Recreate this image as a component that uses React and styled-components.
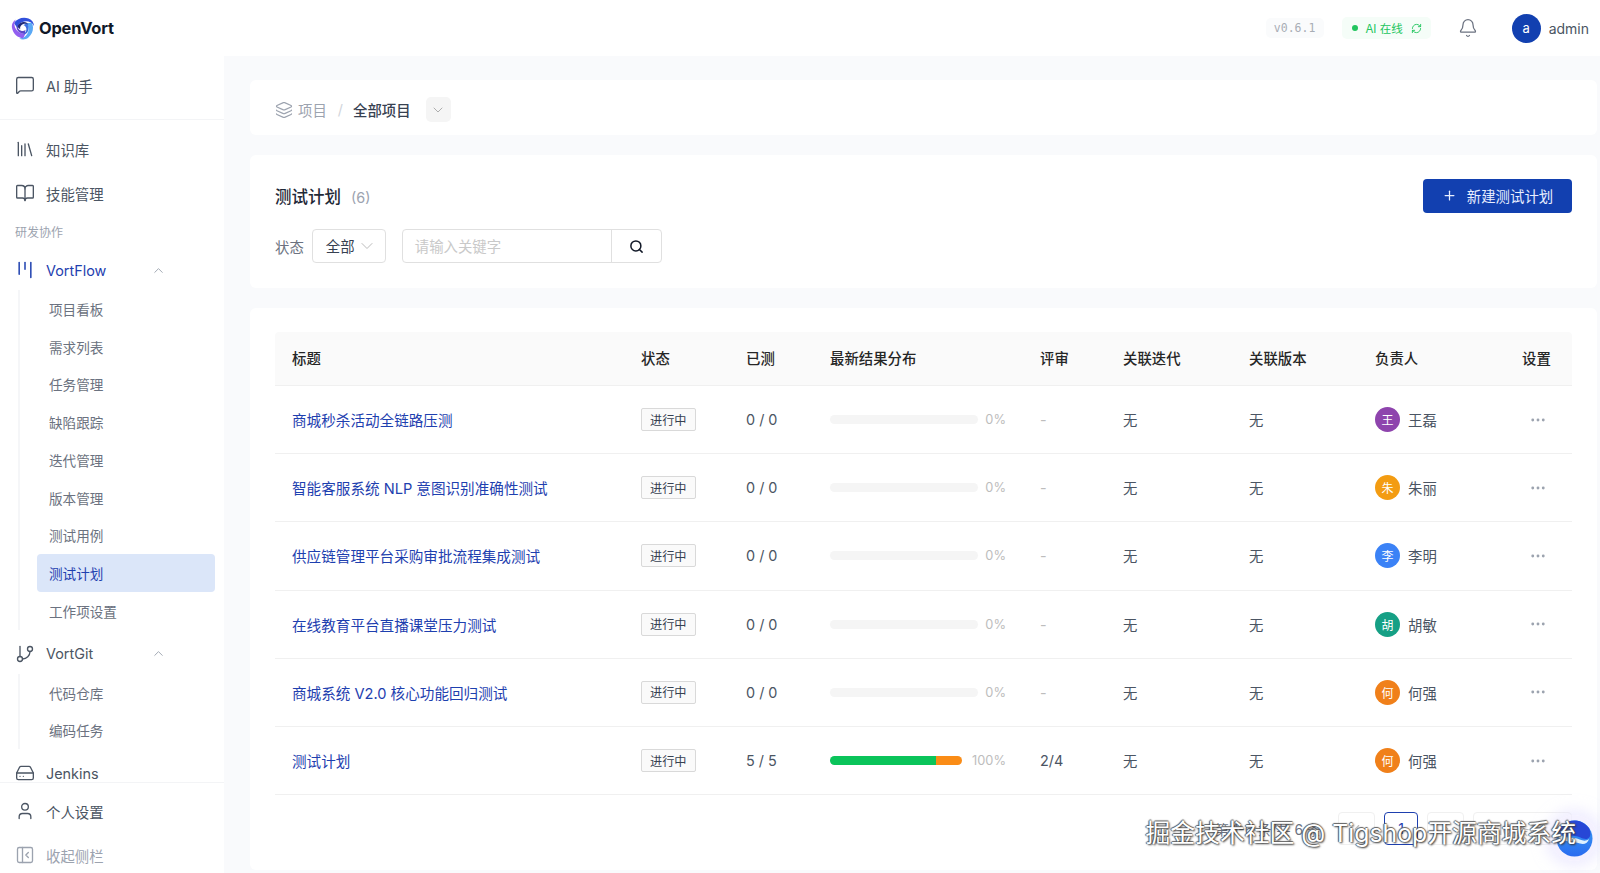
import React from "react";
import styled, { createGlobalStyle } from "styled-components";
import {
  MessageSquare,
  Library,
  BookOpen,
  Kanban,
  GitBranch,
  HardDrive,
  User,
  PanelLeftClose,
  Layers,
  ChevronDown,
  ChevronUp,
  ChevronLeft,
  ChevronRight,
  Search,
  Bell,
  RefreshCw,
  Plus,
  MoreHorizontal,
} from "lucide-react";

const BLUE = "#1e40af";
const FONT = `Inter, "Noto Sans CJK SC", sans-serif`;

const GlobalStyle = createGlobalStyle`
  html, body {
    margin: 0;
    padding: 0;
    height: 100%;
    overflow: hidden;
    background: #f9fafc;
    font-family: ${FONT};
    color: #374151;
  }
  * { box-sizing: border-box; }
`;

const Shell = styled.div`
  display: flex;
  width: 100vw;
  height: 100vh;
  overflow: hidden;
`;

/* sidebar */
const Sidebar = styled.aside`
  width: 224px;
  flex: none;
  height: 100%;
  background: #fff;
  display: flex;
  flex-direction: column;
`;

const LogoRow = styled.div`
  height: 56px;
  flex: none;
  display: flex;
  align-items: center;
  gap: 4px;
  padding-left: 11px;
`;

const LogoText = styled.span`
  font-size: 16.4px;
  font-weight: 700;
  color: #111827;
  letter-spacing: -0.2px;
`;

const ChatBlock = styled.div`
  height: 64px;
  flex: none;
  padding-top: 7px;
  border-bottom: 1px solid #f3f4f6;
`;

const NavScroll = styled.nav`
  flex: 1;
  min-height: 0;
  overflow: hidden;
  padding-top: 7px;
`;

const NavFooter = styled.div`
  flex: none;
  height: 91px;
  border-top: 1px solid #f3f4f6;
  padding-top: 6px;
`;

const NavItem = styled.div`
  height: 44px;
  display: flex;
  align-items: center;
  gap: 11px;
  padding: 0 15px;
  font-size: 14.4px;
  color: ${(p) => (p.$active ? BLUE : p.$muted ? "#9ca3af" : "#4b5563")};
  svg.lead {
    width: 20px;
    height: 20px;
    flex: none;
  }
`;

const Caret = styled(ChevronUp)`
  margin-left: auto;
  margin-right: 43px;
  color: #9ca3af;
`;

const GroupLabel = styled.div`
  height: 33px;
  display: flex;
  align-items: center;
  padding-left: 15px;
  font-size: 12px;
  color: #9ca3af;
`;

const SubList = styled.div`
  margin: -2px 0 2px 18px;
  border-left: 2px solid #f5f6f8;
  padding-right: 9px;
`;

const SubItem = styled.div`
  height: 37.75px;
  display: flex;
  align-items: center;
  margin-left: 17px;
  padding-left: 12px;
  font-size: 13.6px;
  border-radius: 4px;
  color: ${(p) => (p.$active ? BLUE : "#6b7280")};
  background: ${(p) => (p.$active ? "#dbe6f9" : "transparent")};
`;

/* top bar */
const Main = styled.main`
  flex: 1;
  min-width: 0;
  display: flex;
  flex-direction: column;
  position: relative;
`;

const TopBar = styled.header`
  height: 56px;
  flex: none;
  background: #fff;
  display: flex;
  align-items: center;
  justify-content: flex-end;
  padding-right: 11px;
`;

const Version = styled.span`
  font-family: "DejaVu Sans Mono", "Liberation Mono", monospace;
  font-size: 11.5px;
  color: #a8adb5;
  background: #fafbfc;
  border-radius: 5px;
  padding: 3px 9px 3px 8px;
  margin-right: 18px;
`;

const AiStatus = styled.span`
  display: flex;
  align-items: center;
  gap: 7px;
  font-size: 11.5px;
  color: #22c55e;
  background: #f5fdf8;
  border-radius: 5px;
  padding: 3px 9px 3px 10px;
  margin-right: 27px;
`;

const Dot = styled.i`
  width: 6px;
  height: 6px;
  border-radius: 50%;
  background: #22c55e;
`;

const SyncIcon = styled(RefreshCw)`
  margin-left: 1px;
`;

const BellIcon = styled(Bell)`
  color: #6b7280;
  margin-right: 34px;
`;

const Avatar = styled.span`
  width: ${(p) => p.$size}px;
  height: ${(p) => p.$size}px;
  flex: none;
  border-radius: 50%;
  background: ${(p) => p.$color};
  color: #fff;
  font-size: ${(p) => (p.$size > 26 ? 13 : 12)}px;
  display: flex;
  align-items: center;
  justify-content: center;
`;

const AdminName = styled.span`
  font-size: 14px;
  color: #4b5563;
  margin-left: 8px;
`;

/* content */
const Content = styled.div`
  flex: 1;
  min-height: 0;
  padding: 24px 3px 3px 26px;
  display: flex;
  flex-direction: column;
  gap: 20px;
`;

const Card = styled.section`
  background: #fff;
  border-radius: 6px;
  padding: ${(p) => p.$pad};
  flex: ${(p) => (p.$grow ? 1 : "none")};
  height: ${(p) => p.$h || "auto"};
`;

const Crumbs = styled.div`
  display: flex;
  align-items: center;
  font-size: 14.4px;
  height: 55px;
  padding: 4px 0 0 25px;
  color: #9ca3af;
`;

const CrumbIcon = styled(Layers)`
  color: #9ca3af;
  margin-right: 5px;
`;

const CrumbSep = styled.span`
  margin: 0 10px 0 11px;
  color: #d1d5db;
`;

const CrumbCurrent = styled.span`
  color: #374151;
  font-weight: 500;
`;

const CrumbToggle = styled.span`
  width: 25px;
  height: 25px;
  margin-left: 15px;
  border-radius: 5px;
  background: #f5f5f5;
  color: #a8a8a8;
  display: flex;
  align-items: center;
  justify-content: center;
`;

const TitleRow = styled.div`
  display: flex;
  align-items: center;
  justify-content: space-between;
  height: 34px;
`;

const Title = styled.h1`
  margin: 0;
  font-size: 16.5px;
  font-weight: 500;
  color: #1f2937;
  span {
    font-size: 14.4px;
    font-weight: 400;
    color: #9ca3af;
    margin-left: 10px;
  }
`;

const PrimaryButton = styled.button`
  width: 149px;
  height: 34px;
  border: 0;
  border-radius: 4px;
  background: #1240b0;
  color: #e8eeff;
  font: 14.4px ${FONT};
  display: flex;
  align-items: center;
  justify-content: center;
  gap: 10px;
  padding: 0 0 2px;
`;

const FilterRow = styled.div`
  display: flex;
  align-items: center;
  margin-top: 16px;
  height: 34px;
  font-size: 14.4px;
  color: #6b7280;
`;

const SelectBox = styled.div`
  width: 74px;
  height: 34px;
  margin: 0 16px 0 8px;
  border: 1px solid #e0e0e0;
  border-radius: 4px;
  padding: 0 12px 2px 13px;
  display: flex;
  align-items: center;
  justify-content: space-between;
  color: #374151;
  font-size: 14.4px;
  svg {
    color: #b5b5b5;
    margin: 2px -4px 0 0;
  }
`;

const SearchBox = styled.div`
  width: 260px;
  height: 34px;
  border: 1px solid #e0e0e0;
  border-radius: 4px;
  display: flex;
`;

const SearchField = styled.div`
  flex: 1;
  padding: 0 0 2px 12px;
  display: flex;
  align-items: center;
  color: #c9c9c9;
  font-size: 14.4px;
`;

const SearchBtn = styled.div`
  width: 50px;
  border-left: 1px solid #e0e0e0;
  display: flex;
  align-items: center;
  justify-content: center;
  color: #111827;
`;

/* table */
const COLS = "350px 105px 84px 210px 83px 126px 126px 147px 66px";

const HeadRow = styled.div`
  display: grid;
  grid-template-columns: ${COLS};
  height: 54px;
  align-items: center;
  padding-bottom: 3px;
  background: #fafafa;
  border-bottom: 1px solid #f0f0f0;
  border-radius: 4px 4px 0 0;
  font-size: 14.4px;
  font-weight: 500;
  color: #262626;
`;

const Row = styled.div`
  display: grid;
  grid-template-columns: ${COLS};
  height: 68.2px;
  align-items: center;
  border-bottom: 1px solid #f0f0f0;
  font-size: 14.4px;
  color: #4b5563;
`;

const Cell = styled.div`
  padding-left: ${(p) => p.$pl || 16}px;
  display: flex;
  align-items: center;
  min-width: 0;
`;

const PlanLink = styled.span`
  color: ${BLUE};
  font-size: 14.6px;
`;

const Tag = styled.span`
  height: 23px;
  padding: 0 8px;
  display: inline-flex;
  align-items: center;
  border: 1px solid #d9d9d9;
  border-radius: 2px;
  background: #fafafa;
  color: #374151;
  font-size: 12.2px;
`;

const Track = styled.div`
  width: ${(p) => p.$w}px;
  height: 9px;
  border-radius: 5px;
  background: #f5f5f5;
  display: flex;
  overflow: hidden;
  flex: none;
`;

const Seg = styled.div`
  height: 100%;
  background: ${(p) => p.$color};
`;

const Percent = styled.span`
  font-size: 12.8px;
  color: #bdbdbd;
  margin-left: auto;
  padding-right: 18px;
`;

const Dash = styled.span`
  color: #bdbdbd;
`;

const Owner = styled.span`
  margin-left: 8px;
`;

const More = styled(MoreHorizontal)`
  color: #9ca3af;
`;

const Pager = styled.div`
  display: flex;
  justify-content: flex-end;
  align-items: center;
  gap: 9px;
  margin-top: 17px;
  font-size: 14px;
  color: #6b7280;
`;

const PageBtn = styled.span`
  width: ${(p) => p.$w || 37}px;
  height: 33px;
  border: 1px solid ${(p) => (p.$active ? BLUE : "#f0f0f0")};
  border-radius: 4px;
  color: ${(p) => (p.$active ? BLUE : "#bdbdbd")};
  display: flex;
  align-items: center;
  justify-content: center;
`;

const PagerInfo = styled.span`
  margin-right: 8px;
`;

/* overlays */
const Watermark = styled.div`
  position: absolute;
  right: 24px;
  bottom: 23px;
  font-size: 24.8px;
  line-height: 34px;
  color: #fff;
  white-space: nowrap;
  text-shadow: 1px 1px 2px #333, -1px 0 1px #555, 0 -1px 1px #666;
  z-index: 3;
`;

const FloatBall = styled.div`
  position: absolute;
  right: 3px;
  bottom: 12px;
  width: 46px;
  height: 46px;
  border-radius: 50%;
  background: rgba(240, 236, 255, 0.75);
  box-shadow: 0 0 14px 6px rgba(226, 222, 255, 0.55);
  display: flex;
  align-items: center;
  justify-content: center;
  z-index: 2;
`;

const MENU_FLOW = ["项目看板", "需求列表", "任务管理", "缺陷跟踪", "迭代管理", "版本管理", "测试用例", "测试计划", "工作项设置"];

const PLANS = [
  { title: "商城秒杀活动全链路压测", owner: "王磊", color: "#8e44ad" },
  { title: "智能客服系统 NLP 意图识别准确性测试", owner: "朱丽", color: "#f39c12" },
  { title: "供应链管理平台采购审批流程集成测试", owner: "李明", color: "#3b82f6" },
  { title: "在线教育平台直播课堂压力测试", owner: "胡敏", color: "#16a085" },
  { title: "商城系统 V2.0 核心功能回归测试", owner: "何强", color: "#f0801a" },
  { title: "测试计划", owner: "何强", color: "#f0801a", tested: "5 / 5", pass: 80, warn: 20, review: "2/4" },
];

const ARM = "M3 7C6 2.5 12 .5 17.5 2.5C21 3.8 23 7 23 10C20.5 5.5 15.5 4.5 11.5 6C8.5 7.2 6.8 9.5 6.5 12.5C5.2 10.5 4 8.5 3 7Z";

const Logo = () => (
  <svg width="24" height="24" viewBox="0 0 24 24">
    <path d={ARM} fill="#3150dc" />
    <path d={ARM} fill="#5aa9f5" transform="rotate(120 12 12)" />
    <path d={ARM} fill="#925ff0" transform="rotate(240 12 12)" />
    <g transform="translate(5.4 5.4) scale(.55)">
      <path d={ARM} fill="#1e2a78" transform="rotate(-20 12 12)" />
      <path d={ARM} fill="#3b6fe0" transform="rotate(100 12 12)" />
      <path d={ARM} fill="#5a48c8" transform="rotate(220 12 12)" />
    </g>
  </svg>
);

const BallLogo = () => (
  <svg width="37" height="37" viewBox="0 0 37 37">
    <defs>
      <linearGradient id="ballLow" x1="0" y1="0" x2="0" y2="1">
        <stop offset="0" stopColor="#3aa0f2" />
        <stop offset="1" stopColor="#2a6cf0" />
      </linearGradient>
    </defs>
    <circle cx="18.5" cy="18.5" r="18" fill="url(#ballLow)" />
    <path d="M6 5.5A18 18 0 0 1 33 8C36 14 34 19 30 19C25 19 22 15 14 16C9 16.6 5 15 2.5 11C3 9 4.5 7 6 5.5Z" fill="#2747d6" />
    <path d="M2.5 14C8 18 13 17.5 18 18C24 18.6 28 23 33 19C32 23 28 25 24 23.5C17 21 9 22 3 19Z" fill="#dff2ff" />
  </svg>
);

export default function App() {
  return (
    <Shell>
      <GlobalStyle />
      <Sidebar>
        <LogoRow>
          <Logo />
          <LogoText>OpenVort</LogoText>
        </LogoRow>
        <ChatBlock>
          <NavItem>
            <MessageSquare className="lead" strokeWidth={1.6} />
            AI 助手
          </NavItem>
        </ChatBlock>
        <NavScroll>
          <NavItem>
            <Library className="lead" strokeWidth={1.6} />
            知识库
          </NavItem>
          <NavItem>
            <BookOpen className="lead" strokeWidth={1.6} />
            技能管理
          </NavItem>
          <GroupLabel>研发协作</GroupLabel>
          <NavItem $active>
            <Kanban className="lead" strokeWidth={1.8} />
            VortFlow
            <Caret size={15} strokeWidth={1.5} />
          </NavItem>
          <SubList>
            {MENU_FLOW.map((name) => (
              <SubItem key={name} $active={name === "测试计划"}>
                {name}
              </SubItem>
            ))}
          </SubList>
          <NavItem>
            <GitBranch className="lead" strokeWidth={1.6} />
            VortGit
            <Caret size={15} strokeWidth={1.5} />
          </NavItem>
          <SubList>
            <SubItem>代码仓库</SubItem>
            <SubItem>编码任务</SubItem>
          </SubList>
          <NavItem>
            <HardDrive className="lead" strokeWidth={1.6} />
            Jenkins
          </NavItem>
        </NavScroll>
        <NavFooter>
          <NavItem>
            <User className="lead" strokeWidth={1.6} />
            个人设置
          </NavItem>
          <NavItem $muted>
            <PanelLeftClose className="lead" strokeWidth={1.6} />
            收起侧栏
          </NavItem>
        </NavFooter>
      </Sidebar>

      <Main>
        <TopBar>
          <Version>v0.6.1</Version>
          <AiStatus>
            <Dot />
            AI 在线
            <SyncIcon size={11} />
          </AiStatus>
          <BellIcon size={20} strokeWidth={1.5} />
          <Avatar $size={29} $color="#1240b0">a</Avatar>
          <AdminName>admin</AdminName>
        </TopBar>
        <Content>
          <Card>
            <Crumbs>
              <CrumbIcon size={18} strokeWidth={1.6} />
              项目
              <CrumbSep>/</CrumbSep>
              <CrumbCurrent>全部项目</CrumbCurrent>
              <CrumbToggle>
                <ChevronDown size={16} strokeWidth={1.4} />
              </CrumbToggle>
            </Crumbs>
          </Card>
          <Card $pad="24px 25px" $h="133px">
            <TitleRow>
              <Title>
                测试计划<span>(6)</span>
              </Title>
              <PrimaryButton>
                <Plus size={15} />
                新建测试计划
              </PrimaryButton>
            </TitleRow>
            <FilterRow>
              状态
              <SelectBox>
                全部
                <ChevronDown size={20} strokeWidth={1.1} />
              </SelectBox>
              <SearchBox>
                <SearchField>请输入关键字</SearchField>
                <SearchBtn>
                  <Search size={15} strokeWidth={2.4} />
                </SearchBtn>
              </SearchBox>
            </FilterRow>
          </Card>
          <Card $pad="24px 25px 0" $grow>
            <HeadRow>
              <Cell $pl={17}>标题</Cell>
              <Cell>状态</Cell>
              <Cell>已测</Cell>
              <Cell>最新结果分布</Cell>
              <Cell>评审</Cell>
              <Cell>关联迭代</Cell>
              <Cell>关联版本</Cell>
              <Cell>负责人</Cell>
              <Cell>设置</Cell>
            </HeadRow>
            {PLANS.map((plan) => (
              <Row key={plan.title}>
                <Cell $pl={17}>
                  <PlanLink>{plan.title}</PlanLink>
                </Cell>
                <Cell>
                  <Tag>进行中</Tag>
                </Cell>
                <Cell>{plan.tested || "0 / 0"}</Cell>
                <Cell>
                  <Track $w={plan.pass ? 132 : 148}>
                    {plan.pass && (
                      <>
                        <Seg $color="#0ac45a" style={{ width: `${plan.pass}%` }} />
                        <Seg $color="#fa8c16" style={{ width: `${plan.warn}%` }} />
                      </>
                    )}
                  </Track>
                  <Percent>{plan.pass ? "100%" : "0%"}</Percent>
                </Cell>
                <Cell>{plan.review || <Dash>-</Dash>}</Cell>
                <Cell>无</Cell>
                <Cell>无</Cell>
                <Cell>
                  <Avatar $size={25} $color={plan.color}>{plan.owner[0]}</Avatar>
                  <Owner>{plan.owner}</Owner>
                </Cell>
                <Cell $pl={23}>
                  <More size={18} strokeWidth={1.8} />
                </Cell>
              </Row>
            ))}
            <Pager>
              <PagerInfo>第 1-6 条/共 6 条</PagerInfo>
              <PageBtn>
                <ChevronLeft size={14} />
              </PageBtn>
              <PageBtn $active $w={34}>1</PageBtn>
              <PageBtn>
                <ChevronRight size={14} />
              </PageBtn>
              <PageBtn $w={99}>10 条/页</PageBtn>
            </Pager>
          </Card>
        </Content>
        <Watermark>掘金技术社区 @ Tigshop开源商城系统</Watermark>
        <FloatBall>
          <BallLogo />
        </FloatBall>
      </Main>
    </Shell>
  );
}
